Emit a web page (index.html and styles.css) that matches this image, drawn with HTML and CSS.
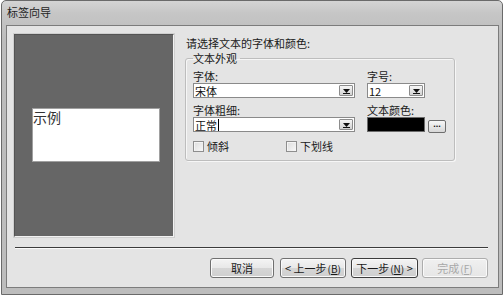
FILE: index.html
```html
<!DOCTYPE html>
<html lang="zh">
<head>
<meta charset="utf-8">
<title>标签向导</title>
<link rel="stylesheet" href="styles.css">
</head>
<body>
<div class="window">
  <div class="titlebar">标签向导</div>
  <div class="client">
    <div class="main">
      <div class="preview">
        <div class="sample">示例</div>
      </div>
      <div class="form">
        <div class="prompt">请选择文本的字体和颜色:</div>
        <fieldset class="group">
          <legend>文本外观</legend>
          <div class="grid">
            <div class="lbl">字体:</div>
            <div class="lbl">字号:</div>
            <div class="combo wide"><span class="val">宋体</span><span class="drop"><svg width="7" height="5" viewBox="0 0 7 5"><path d="M0 0h7L3.5 4z" fill="#111"/><rect x="0" y="4" width="7" height="1" fill="#111"/></svg></span></div>
            <div class="combo narrow"><span class="val">12</span><span class="drop"><svg width="7" height="5" viewBox="0 0 7 5"><path d="M0 0h7L3.5 4z" fill="#111"/><rect x="0" y="4" width="7" height="1" fill="#111"/></svg></span></div>
            <div class="lbl row2">字体粗细:</div>
            <div class="lbl row2">文本颜色:</div>
            <div class="combo wide"><span class="val caret">正常</span><span class="drop"><svg width="7" height="5" viewBox="0 0 7 5"><path d="M0 0h7L3.5 4z" fill="#111"/><rect x="0" y="4" width="7" height="1" fill="#111"/></svg></span></div>
            <div class="color-row"><span class="swatch"></span><span class="more">...</span></div>
          </div>
          <div class="checks">
            <label class="check"><span class="box"></span>倾斜</label>
            <label class="check"><span class="box"></span>下划线</label>
          </div>
        </fieldset>
      </div>
    </div>
    <div class="sep"></div>
    <div class="buttons">
      <span class="btn b1">取消</span>
      <span class="btn b2">&lt; 上一步<span class="acc">(<u>B</u>)</span></span>
      <span class="btn b3 focus">下一步<span class="acc">(<u>N</u>)</span>&nbsp;&gt;</span>
      <span class="btn b4 disabled">完成<span class="acc">(<u>F</u>)</span></span>
    </div>
  </div>
</div>
</body>
</html>
```
FILE: styles.css
```css
* { box-sizing: border-box; }
html, body { margin: 0; padding: 0; }
body {
  background: #ffffff;
  width: 504px;
  height: 295px;
  overflow: hidden;
  font-family: "Noto Sans CJK SC", "Noto Sans", sans-serif;
  font-size: 11px;
  color: #1a1a1a;
}
.window {
  margin-left: 1px;
  width: 502px;
  height: 295px;
  border: 1px solid #6a6a6a;
  border-radius: 5px 5px 0 0;
  background: linear-gradient(180deg, #d4d4d4 0px, #c6c6c6 12px, #bcbcbc 40px, #bdbdbd 100%);
  display: flex;
  flex-direction: column;
}
.titlebar {
  height: 24px;
  line-height: 23px;
  padding-left: 5px;
  font-size: 11px;
  color: #1e1e1e;
}
.client {
  margin: 0 3px 0 4px;
  height: 263px;
  border: 1px solid #7c7c7c;
  background: #e4e4e4;
  display: flex;
  flex-direction: column;
}
.main {
  display: flex;
  padding: 8px 0 0 7px;
}
.preview {
  width: 160px;
  height: 203px;
  background: #666666;
  border: 1px solid;
  border-color: #545454 #f2f2f2 #f2f2f2 #545454;
  box-shadow: 0 0 0 1px #cfcfcf;
}
.sample {
  margin: 73px 0 0 17px;
  width: 128px;
  height: 54px;
  background: #ffffff;
  border: 1px solid #a0a0a0;
  font-size: 14px;
  line-height: 17px;
  color: #333;
}
.form {
  margin-left: 11px;
  padding-top: 2px;
}
.prompt {
  line-height: 14px;
  height: 14px;
  padding-left: 1px;
}
.group {
  margin: 1px 0 0 0;
  width: 269px;
  padding: 5px 7px 7px 7px;
  border: 1px solid #bdbdbd;
  border-radius: 3px;
  box-shadow: inset 1px 1px 0 #f6f6f6, 1px 1px 0 #f6f6f6;
}
.group legend {
  padding: 0 3px 0 0;
  line-height: 14px;
  height: 14px;
  font-size: 11px;
}
.grid {
  display: grid;
  grid-template-columns: 162px 80px;
  column-gap: 12px;
}
.lbl {
  height: 13px;
  line-height: 13px;
}
.lbl.row2 {
  margin-top: 6px;
}
.combo {
  height: 15px;
  background: #ffffff;
  border: 1px solid #8a8a8a;
  display: flex;
  align-items: center;
  justify-content: space-between;
  padding: 0 1px 0 1px;
}
.combo.narrow { width: 58px; }
.val {
  line-height: 12px;
  height: 12px;
  font-size: 11px;
  color: #111;
}
.val.caret {
  border-right: 1px solid #000;
  padding-right: 1px;
}
.drop {
  width: 14px;
  height: 11px;
  border: 1px solid #8c8c8c;
  border-radius: 1px;
  background: linear-gradient(180deg, #f6f6f6, #d2d2d2);
  display: flex;
  align-items: center;
  justify-content: center;
  padding-top: 1px;
}
.drop svg { display: block; }
.color-row {
  display: flex;
  align-items: flex-start;
  height: 15px;
}
.swatch {
  width: 58px;
  height: 15px;
  background: #000;
  border: 1px solid #6c6c6c;
}
.more {
  margin: 3px 0 0 3px;
  width: 18px;
  height: 13px;
  border: 1px solid #6e6e6e;
  border-radius: 2px;
  background: linear-gradient(180deg, #f7f7f7, #d7d7d7);
  font-family: "Liberation Sans", sans-serif;
  font-size: 9px;
  font-weight: bold;
  line-height: 7px;
  text-align: center;
  color: #111;
  overflow: hidden;
}
.checks {
  display: flex;
  margin-top: 8px;
  height: 13px;
}
.check {
  display: flex;
  align-items: center;
  width: 93px;
  line-height: 13px;
}
.box {
  width: 11px;
  height: 11px;
  border: 1px solid #8e8e8e;
  background: linear-gradient(135deg, #dcdcdc, #f8f8f8);
  margin-right: 3px;
  box-shadow: inset 1px 1px 0 #f4f4f4;
}
.sep {
  margin: 10px 10px 0 8px;
  height: 2px;
  border-top: 1px solid #3c3c3c;
  border-bottom: 1px solid #fafafa;
}
.buttons {
  display: flex;
  justify-content: flex-end;
  margin-top: 9px;
  padding-right: 10px;
}
.btn {
  height: 20px;
  border: 1px solid #707070;
  border-radius: 3px;
  background: linear-gradient(180deg, #f4f4f4 0%, #e8e8e8 50%, #d6d6d6 51%, #cfcfcf 100%);
  display: flex;
  align-items: center;
  justify-content: center;
  font-size: 11px;
  color: #1a1a1a;
  box-shadow: inset 0 0 0 1px #fafafa;
}
.b1 { width: 64px; }
.b2 { width: 66px; margin-left: 6px; }
.b3 { width: 67px; margin-left: 5px; }
.b4 { width: 66px; margin-left: 4px; }
.focus { border-color: #3c3c3c; }
.acc { font-size: 10px; margin-left: 1px; }
.acc u { text-decoration: underline; }
.disabled {
  color: #a8a8a8;
  border-color: #adadad;
  background: linear-gradient(180deg, #f0f0f0, #e6e6e6);
}
```
